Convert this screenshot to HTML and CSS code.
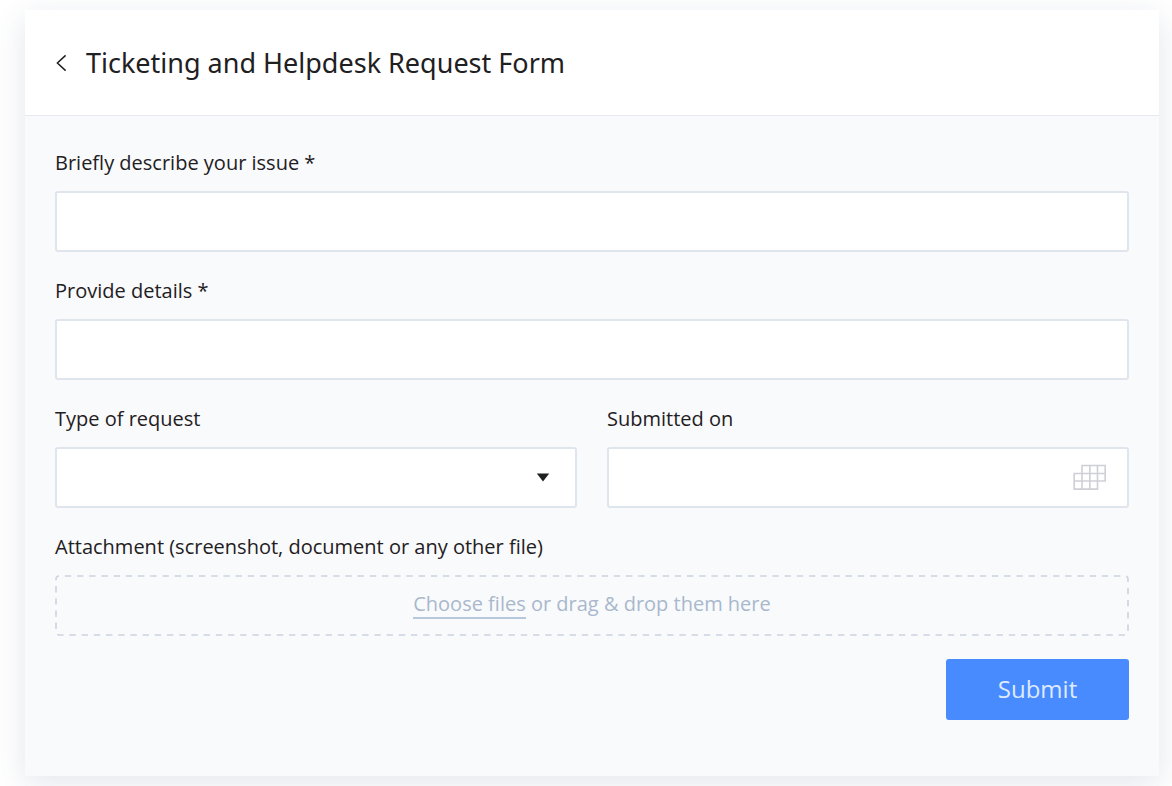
FILE: index.html
```html
<!DOCTYPE html>
<html lang="en">
<head>
<meta charset="utf-8">
<meta name="viewport" content="width=device-width, initial-scale=1">
<title>Ticketing and Helpdesk Request Form</title>
<link rel="stylesheet" href="styles.css">
</head>
<body>
<main class="card">
  <header class="card-header">
    <button class="back" type="button" aria-label="Back">
      <svg width="11" height="18" viewBox="0 0 11 18" fill="none" stroke="#1f2022" stroke-width="1.5"><path d="M9.600 1.400 1.400 9l8.200 7.600"/></svg>
    </button>
    <h1 class="title">Ticketing and Helpdesk Request Form</h1>
  </header>
  <form class="form">
    <div class="fields">
      <div class="field">
        <label class="label" for="issue">Briefly describe your issue *</label>
        <input class="control" id="issue" type="text" required>
      </div>
      <div class="field">
        <label class="label" for="details">Provide details *</label>
        <input class="control" id="details" type="text" required>
      </div>
      <div class="row">
        <div class="field">
          <label class="label" for="type">Type of request</label>
          <div class="control-wrap">
            <select class="control" id="type"><option value=""></option></select>
            <svg class="caret" width="14" height="9" viewBox="0 0 14 9" fill="#1f2022"><path d="M.8.6h12.400L7 8.400z"/></svg>
          </div>
        </div>
        <div class="field">
          <label class="label" for="date">Submitted on</label>
          <div class="control-wrap">
            <input class="control" id="date" type="text">
            <button class="calendar" type="button" aria-label="Pick a date">
              <svg width="34" height="27" viewBox="0 0 34 27" fill="none" stroke="#cfcfd6" stroke-width="1.6"><path d="M9 1.500h23.200V17H9zM1.200 9.500h23.300v15.600H1.200zM1.200 17H9M24.500 9.500H32.200M9 17v8.100M16.800 1.500v23.600M24.500 1.500v8"/></svg>
            </button>
          </div>
        </div>
      </div>
      <div class="field">
        <label class="label" for="files">Attachment (screenshot, document or any other file)</label>
        <label class="dropzone">
          <svg class="dropzone-outline" aria-hidden="true"><rect class="dropzone-rect" x="1" y="1" rx="3"/></svg>
          <input class="file-input" id="files" type="file" multiple>
          <span><span class="choose">Choose files</span> or drag &amp; drop them here</span>
        </label>
      </div>
    </div>
    <button class="submit" type="submit">Submit</button>
  </form>
</main>
</body>
</html>
```
FILE: styles.css
```css
* {
  box-sizing: border-box;
}

body {
  margin: 0;
  background: #fff;
  color: #1f2022;
  font-family: "Open Sans", "Noto Sans", sans-serif;
  font-size: 20px;
  line-height: 28px;
}

button,
input,
select {
  font: inherit;
}

.card {
  margin: 10px 13px 10px 25px;
  background: #f9fafc;
  box-shadow: 0 8px 30px rgba(60, 80, 120, 0.14);
}

.card-header {
  display: flex;
  align-items: center;
  gap: 19px;
  padding: 32px 31px;
  background: #fff;
  border-bottom: 1px solid #e6eaf0;
}

.back {
  display: flex;
  padding: 0;
  border: 0;
  background: none;
}

.title {
  margin: 0;
  font-family: "Noto Sans", "Open Sans", sans-serif;
  font-size: 27px;
  font-weight: 400;
  line-height: 41px;
}

.form {
  display: flex;
  flex-direction: column;
  gap: 23px;
  padding: 33px 30px 56px;
}

.fields {
  display: flex;
  flex-direction: column;
  gap: 25px;
}

.field {
  display: flex;
  flex-direction: column;
  gap: 14px;
  min-width: 0;
}

.row {
  display: grid;
  grid-template-columns: 1fr 1fr;
  gap: 30px;
}

.control {
  width: 100%;
  height: 61px;
  padding: 0 16px;
  border: 2px solid #dfe5ec;
  border-radius: 3px;
  background: #fff;
  color: inherit;
  appearance: none;
}

.control-wrap {
  display: flex;
  position: relative;
}

.caret {
  position: absolute;
  top: 26px;
  right: 27px;
  pointer-events: none;
}

.calendar {
  display: flex;
  position: absolute;
  top: 17px;
  right: 22px;
  padding: 0;
  border: 0;
  background: none;
}

.dropzone {
  display: flex;
  position: relative;
  align-items: center;
  justify-content: center;
  height: 61px;
  padding-bottom: 3px;
  color: #a9b8cc;
}

.dropzone-outline {
  position: absolute;
  inset: 0;
  width: 100%;
  height: 100%;
}

.dropzone-rect {
  width: calc(100% - 2px);
  height: calc(100% - 2px);
  fill: none;
  stroke: #ccd4df;
  stroke-width: 1.6;
  stroke-dasharray: 6.4 5.8;
  stroke-dashoffset: 6.4;
}

.file-input {
  position: absolute;
  inset: 0;
  width: 100%;
  opacity: 0;
}

.choose {
  border-bottom: 2px solid #b7c7dc;
}

.submit {
  align-self: flex-end;
  width: 183px;
  height: 61px;
  padding: 0 0 2px;
  border: 0;
  border-radius: 3px;
  background: #488bff;
  color: #deeaff;
  font-size: 24px;
}
```
